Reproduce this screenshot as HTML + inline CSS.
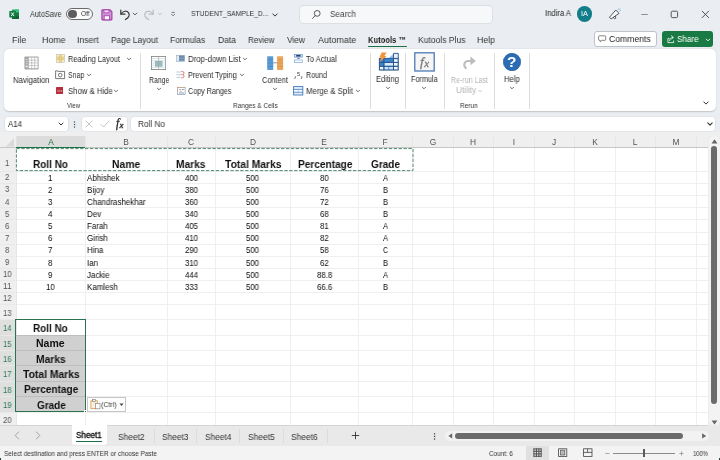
<!DOCTYPE html><html><head><meta charset="utf-8"><title>Excel</title><style>
html,body{margin:0;padding:0}body{width:720px;height:460px;overflow:hidden;position:relative;background:#eaedf1;font-family:"Liberation Sans", sans-serif}
.t{position:absolute;white-space:nowrap;transform-origin:0 50%;line-height:14px;height:14px;will-change:transform}
</style></head><body>
<svg style="position:absolute;left:8.6px;top:8.5px;" width="10.6" height="10.4" viewBox="0 0 11 11" fill="none">
<rect x="3" y="0.5" width="7.6" height="10" rx="0.8" fill="#21a366"/>
<rect x="6.8" y="0.5" width="3.8" height="3.3" fill="#33c481"/>
<rect x="6.8" y="3.8" width="3.8" height="3.3" fill="#107c41"/>
<rect x="3" y="7.1" width="7.6" height="3.4" fill="#185c37"/>
<rect x="0.2" y="2" width="7" height="7" rx="0.7" fill="#107c41"/>
<path d="M2.2 3.6 L5.2 7.4 M5.2 3.6 L2.2 7.4" stroke="#fff" stroke-width="1"/>
</svg>
<div style="position:absolute;left:66.2px;top:7.9px;width:26.7px;height:12.2px;background:#fbfbfb;border:0.7px solid #6a6a6a;border-radius:7px;box-sizing:border-box"></div>
<div style="position:absolute;left:68.4px;top:9.7px;width:8.7px;height:8.7px;background:#5d5d5d;border-radius:50%"></div>
<svg style="position:absolute;left:101px;top:8.5px;" width="12" height="12" viewBox="0 0 12 12" fill="none">
<path d="M0.9 1.5 Q0.9 0.9 1.5 0.9 H9 L10.9 2.8 V10.3 Q10.9 10.9 10.3 10.9 H1.5 Q0.9 10.9 0.9 10.3 Z" fill="#cf93d6" stroke="#a23aa8" stroke-width="1.1"/>
<rect x="3" y="1" width="5" height="2.8" fill="#f3e4f5" stroke="#a23aa8" stroke-width="0.7"/>
<rect x="3.2" y="6.8" width="5.4" height="4" fill="#fff" stroke="#a23aa8" stroke-width="0.8"/>
</svg>
<svg style="position:absolute;left:119px;top:8px;" width="12" height="13" viewBox="0 0 12 13" fill="none">
<path d="M1.8 2 V6.2 H6" stroke="#3a3a3a" stroke-width="1.2" stroke-linecap="round" stroke-linejoin="round"/>
<path d="M2 6 C4 2.6 8 2.4 9.6 4.8 C11 7 10 9.4 6.4 11.6" stroke="#3a3a3a" stroke-width="1.2" stroke-linecap="round"/>
</svg>
<svg style="position:absolute;left:131px;top:10.3px;" width="8" height="8" viewBox="0 0 8 8" fill="none"><path d="M2.2 3.1 L4 4.9 L5.8 3.1" stroke="#444" stroke-width="0.9" stroke-linecap="round" stroke-linejoin="round"/></svg>
<svg style="position:absolute;left:143px;top:8px;" width="12" height="13" viewBox="0 0 12 13" fill="none">
<path d="M10.2 2 V6.2 H6" stroke="#b9bcc1" stroke-width="1.2" stroke-linecap="round" stroke-linejoin="round"/>
<path d="M10 6 C8 2.6 4 2.4 2.4 4.8 C1 7 2 9.4 5.6 11.6" stroke="#b9bcc1" stroke-width="1.2" stroke-linecap="round"/>
</svg>
<svg style="position:absolute;left:155.5px;top:10.3px;" width="8" height="8" viewBox="0 0 8 8" fill="none"><path d="M2.4 3.2 L4 4.8 L5.6 3.2" stroke="#b8bbc0" stroke-width="0.9" stroke-linecap="round" stroke-linejoin="round"/></svg>
<svg style="position:absolute;left:169px;top:10px;" width="8" height="9" viewBox="0 0 8 9" fill="none"><path d="M2.6 2.4 H5.6" stroke="#555" stroke-width="0.8"/><path d="M2.5 4.2 L4.1 5.8 L5.7 4.2" stroke="#555" stroke-width="0.8" stroke-linecap="round" stroke-linejoin="round"/></svg>
<svg style="position:absolute;left:271px;top:10.5px;" width="8" height="8" viewBox="0 0 8 8" fill="none"><path d="M1.7999999999999998 2.9 L4 5.1 L6.2 2.9" stroke="#333" stroke-width="1" stroke-linecap="round" stroke-linejoin="round"/></svg>
<div style="position:absolute;left:298.5px;top:4.5px;width:194.5px;height:19.5px;background:#f7f8fa;border:1px solid #dcdfe3;border-radius:4px;box-sizing:border-box"></div>
<svg style="position:absolute;left:311px;top:9px;" width="11" height="11" viewBox="0 0 11 11" fill="none"><circle cx="6.2" cy="4.4" r="2.9" stroke="#444" stroke-width="0.9"/><path d="M4.2 6.6 L1.6 9.4" stroke="#444" stroke-width="0.9" stroke-linecap="round"/></svg>
<div style="position:absolute;left:576.5px;top:6.3px;width:15.5px;height:15.5px;background:#127e8a;border-radius:50%"></div>
<svg style="position:absolute;left:607px;top:7px;" width="16" height="15" viewBox="0 0 16 15" fill="none">
<path d="M2.4 10.4 L8.8 3 L12 6.4 L4.2 11.8 Z" fill="#f8f9fb" stroke="#444" stroke-width="0.9" stroke-linejoin="round"/>
<path d="M6.4 10.4 L7.4 11.8 L8.8 11.2 L8.4 9.2" stroke="#444" stroke-width="0.8" stroke-linejoin="round" stroke-linecap="round"/>
<path d="M10.8 2.6 L11.6 1.6 M12.6 4.2 L13.8 3.4 M12 3 L13 1.8" stroke="#7fb2e0" stroke-width="0.7" stroke-linecap="round"/>
</svg>
<svg style="position:absolute;left:640px;top:10px;" width="9" height="9" viewBox="0 0 9 9" fill="none"><path d="M1.2 4.5 H7.8" stroke="#777" stroke-width="0.8"/></svg>
<svg style="position:absolute;left:670px;top:9.5px;" width="9" height="9" viewBox="0 0 9 9" fill="none"><rect x="1.2" y="1.2" width="6.4" height="6.4" rx="1.2" stroke="#444" stroke-width="0.9"/></svg>
<svg style="position:absolute;left:700.5px;top:10px;" width="9" height="9" viewBox="0 0 9 9" fill="none"><path d="M1.2 1.2 L7.6 7.6 M7.6 1.2 L1.2 7.6" stroke="#444" stroke-width="0.9" stroke-linecap="round"/></svg>
<div style="position:absolute;left:368px;top:45.5px;width:38.5px;height:1.2px;background:#1e7145;border-radius:1px"></div>
<div style="position:absolute;left:593.5px;top:31px;width:63.0px;height:15.5px;background:#fff;border:1px solid #bfc2c6;border-radius:3px;box-sizing:border-box"></div>
<svg style="position:absolute;left:597.6px;top:35.3px;" width="9" height="8" viewBox="0 0 9 8" fill="none"><path d="M1.3 0.8 H7 Q7.7 0.8 7.7 1.5 V4.6 Q7.7 5.3 7 5.3 H3.8 L2.2 6.9 V5.3 H1.3 Q0.6 5.3 0.6 4.6 V1.5 Q0.6 0.8 1.3 0.8 Z" stroke="#555" stroke-width="0.7" stroke-linejoin="round"/></svg>
<div style="position:absolute;left:662px;top:31px;width:51px;height:15.5px;background:#1a7a43;border-radius:3px"></div>
<svg style="position:absolute;left:666.5px;top:35px;" width="8" height="9" viewBox="0 0 8 9" fill="none"><path d="M2.6 3.4 H0.9 V7.6 H6.6 V5.6" stroke="#fff" stroke-width="0.8" stroke-linejoin="round"/><path d="M2.6 5.6 C2.8 3.6 4 2.6 6 2.4 M4.4 0.8 L6.2 2.4 L4.6 4.2" stroke="#fff" stroke-width="0.8" stroke-linecap="round" stroke-linejoin="round"/></svg>
<svg style="position:absolute;left:703.5px;top:35.5px;" width="8" height="8" viewBox="0 0 8 8" fill="none"><path d="M2.3 3.15 L4 4.85 L5.7 3.15" stroke="#fff" stroke-width="0.9" stroke-linecap="round" stroke-linejoin="round"/></svg>
<div style="position:absolute;left:4px;top:48.8px;width:712px;height:62.3px;background:#fff;border-radius:5px;box-shadow:0 0.5px 1.5px rgba(0,0,0,0.18)"></div>
<div style="position:absolute;left:139.9px;top:52.5px;width:0.8px;height:56.0px;background:#dcdcdc;"></div>
<div style="position:absolute;left:370.1px;top:52.5px;width:0.8px;height:56.0px;background:#dcdcdc;"></div>
<div style="position:absolute;left:405.2px;top:52.5px;width:0.8px;height:56.0px;background:#dcdcdc;"></div>
<div style="position:absolute;left:444.4px;top:52.5px;width:0.8px;height:56.0px;background:#dcdcdc;"></div>
<div style="position:absolute;left:494.4px;top:52.5px;width:0.8px;height:56.0px;background:#dcdcdc;"></div>
<div style="position:absolute;left:529.2px;top:52.5px;width:0.8px;height:56.0px;background:#dcdcdc;"></div>
<svg style="position:absolute;left:24px;top:56.2px;" width="15" height="14" viewBox="0 0 15 14" fill="none">
<rect x="0.4" y="0.4" width="14.2" height="13" rx="0.8" fill="#a6a6a6"/>
<rect x="4.8" y="1.6" width="8.8" height="10.6" fill="#fff"/>
<path d="M7.7 1.6 V12.2 M10.7 1.6 V12.2 M4.8 4.2 H13.6 M4.8 6.9 H13.6 M4.8 9.6 H13.6" stroke="#b5b5b5" stroke-width="0.7"/>
<path d="M1.8 3.4 H3.6 M1.8 5.6 H3.6 M1.8 7.8 H3.6" stroke="#e8e8e8" stroke-width="0.8"/>
<rect x="1.6" y="9.8" width="2.2" height="1.4" fill="#f2f2f2"/>
</svg>
<svg style="position:absolute;left:55.8px;top:54.1px;" width="9" height="9" viewBox="0 0 9 9" fill="none">
<rect x="0.4" y="0.4" width="8" height="8" fill="#fbf3cf" stroke="#b9b9b9" stroke-width="0.6"/>
<rect x="3.1" y="0.6" width="2.6" height="7.6" fill="#f0d77c"/>
<rect x="0.6" y="3.1" width="7.6" height="2.6" fill="#f0d77c"/>
<path d="M0.4 3.1 H8.4 M0.4 5.7 H8.4 M3.1 0.4 V8.4 M5.7 0.4 V8.4" stroke="#c9b98a" stroke-width="0.5"/>
</svg>
<svg style="position:absolute;left:125.30000000000001px;top:55.2px;" width="8" height="8" viewBox="0 0 8 8" fill="none"><path d="M2.4 3.2 L4 4.8 L5.6 3.2" stroke="#444" stroke-width="0.8" stroke-linecap="round" stroke-linejoin="round"/></svg>
<svg style="position:absolute;left:54.6px;top:69.8px;" width="11" height="10" viewBox="0 0 11 10" fill="none">
<path d="M0.6 2.6 V0.9 H3" stroke="#555" stroke-width="0.8"/>
<path d="M3 1.4 H9.6 V8.6 H0.6 V2.6" stroke="#555" stroke-width="0.8"/>
<circle cx="5.2" cy="5.1" r="1.8" stroke="#555" stroke-width="0.8"/>
</svg>
<svg style="position:absolute;left:84.5px;top:71px;" width="8" height="8" viewBox="0 0 8 8" fill="none"><path d="M2.4 3.2 L4 4.8 L5.6 3.2" stroke="#444" stroke-width="0.8" stroke-linecap="round" stroke-linejoin="round"/></svg>
<svg style="position:absolute;left:55.8px;top:86.9px;" width="7.6" height="7.6" viewBox="0 0 7.6 7.6" fill="none">
<rect x="0" y="0" width="7.6" height="7.6" rx="0.7" fill="#b8303d"/>
<circle cx="2" cy="3.9" r="0.55" fill="#f6d5d8"/><circle cx="3.8" cy="3.9" r="0.55" fill="#f6d5d8"/><circle cx="5.6" cy="3.9" r="0.55" fill="#f6d5d8"/>
</svg>
<svg style="position:absolute;left:112.3px;top:87px;" width="8" height="8" viewBox="0 0 8 8" fill="none"><path d="M2.4 3.2 L4 4.8 L5.6 3.2" stroke="#444" stroke-width="0.8" stroke-linecap="round" stroke-linejoin="round"/></svg>
<svg style="position:absolute;left:151px;top:56px;" width="15" height="14" viewBox="0 0 15 14" fill="none">
<rect x="0.5" y="0.4" width="14.2" height="13.2" fill="#fff" stroke="#7d7d7d" stroke-width="0.8"/>
<path d="M0.5 2.6 H14.7 M0.5 4.8 H14.7 M0.5 7 H14.7 M0.5 9.2 H14.7 M0.5 11.4 H14.7" stroke="#bcd3da" stroke-width="0.6"/>
<rect x="4" y="4.9" width="7.4" height="5.8" fill="#94b8b8"/>
<path d="M4 7 H11.4 M4 9 H11.4" stroke="#a9c9c9" stroke-width="0.5"/>
<path d="M7.6 0.4 V13.6" stroke="#a0a0a0" stroke-width="0.6"/>
</svg>
<svg style="position:absolute;left:154.5px;top:85.2px;" width="8" height="8" viewBox="0 0 8 8" fill="none"><path d="M2.4 3.2 L4 4.8 L5.6 3.2" stroke="#444" stroke-width="0.8" stroke-linecap="round" stroke-linejoin="round"/></svg>
<svg style="position:absolute;left:176.3px;top:55px;" width="9" height="7" viewBox="0 0 9 7" fill="none">
<rect x="0.4" y="0.4" width="8.2" height="5.8" fill="#fff" stroke="#9aa7b5" stroke-width="0.6"/>
<path d="M1 1.8 H2.4 M1 3.3 H2.4 M1 4.8 H2.4" stroke="#b5bec8" stroke-width="0.5"/>
<rect x="2.9" y="0.5" width="5.6" height="5.4" fill="#6a8cae"/>
<path d="M2.9 3.2 H8.5" stroke="#9db6cf" stroke-width="0.6"/>
<path d="M0.4 6.3 H8.6" stroke="#9cc3e6" stroke-width="0.7"/>
</svg>
<svg style="position:absolute;left:240.6px;top:55.2px;" width="8" height="8" viewBox="0 0 8 8" fill="none"><path d="M2.4 3.2 L4 4.8 L5.6 3.2" stroke="#444" stroke-width="0.8" stroke-linecap="round" stroke-linejoin="round"/></svg>
<svg style="position:absolute;left:176.3px;top:71.2px;" width="9" height="8" viewBox="0 0 9 8" fill="none">
<path d="M0.4 1 H4.6 M0.4 3.7 H4.6 M0.4 6.4 H4.6" stroke="#a9bccf" stroke-width="0.8"/>
<path d="M5.2 0.6 H6.8 Q8 0.6 8 2 Q8 3.5 6.6 3.6 Q8 3.7 8 5.2 Q8 6.8 6.8 6.8 H5.2" stroke="#e07468" stroke-width="0.9"/>
<path d="M4.6 3.7 H6.6" stroke="#e07468" stroke-width="0.7"/>
</svg>
<svg style="position:absolute;left:237.6px;top:71px;" width="8" height="8" viewBox="0 0 8 8" fill="none"><path d="M2.4 3.2 L4 4.8 L5.6 3.2" stroke="#444" stroke-width="0.8" stroke-linecap="round" stroke-linejoin="round"/></svg>
<svg style="position:absolute;left:176.5px;top:86.9px;" width="9" height="8.4" viewBox="0 0 9 8.4" fill="none">
<rect x="0.5" y="0.5" width="7.6" height="7" fill="#fff" stroke="#8a9bb0" stroke-width="0.7"/>
<path d="M2 2.6 H4.2 M3 4.4 H4.6" stroke="#e08a4a" stroke-width="0.8"/>
<path d="M5 2.6 H7 M2 6 H7" stroke="#5b8cc4" stroke-width="0.8"/>
<path d="M0.5 0.5 H8.1" stroke="#e0a36a" stroke-width="0.6"/>
</svg>
<svg style="position:absolute;left:266.8px;top:55.8px;" width="17" height="15" viewBox="0 0 17 15" fill="none">
<rect x="0.2" y="0.3" width="6" height="13.6" rx="0.5" fill="#5c9ad6"/>
<rect x="10.1" y="0.3" width="6" height="13.6" rx="0.5" fill="#eaa55a"/>
<path d="M0.2 3.8 H6.2 M0.2 7.1 H6.2 M0.2 10.4 H6.2" stroke="#4482c2" stroke-width="0.6"/>
<path d="M10.1 3.8 H16.1 M10.1 7.1 H16.1 M10.1 10.4 H16.1" stroke="#d68d3e" stroke-width="0.6"/>
<path d="M6.2 6.8 H10.1" stroke="#6d7f93" stroke-width="0.8"/>
</svg>
<svg style="position:absolute;left:271px;top:85.2px;" width="8" height="8" viewBox="0 0 8 8" fill="none"><path d="M2.4 3.2 L4 4.8 L5.6 3.2" stroke="#444" stroke-width="0.8" stroke-linecap="round" stroke-linejoin="round"/></svg>
<svg style="position:absolute;left:293.6px;top:54px;" width="9" height="9.5" viewBox="0 0 9 9.5" fill="none">
<rect x="0.5" y="0.5" width="7.8" height="2.6" fill="#e4edf7" stroke="#5b8cc4" stroke-width="0.7"/>
<rect x="2.2" y="1" width="4.4" height="1.6" fill="#1f3f73"/>
<path d="M3.4 4.5 H5.6" stroke="#3a5f93" stroke-width="0.8"/>
<rect x="0.5" y="6" width="7.8" height="2.6" fill="#fff" stroke="#7aa7d8" stroke-width="0.7"/>
</svg>
<svg style="position:absolute;left:294px;top:75.5px;" width="9" height="4" viewBox="0 0 9 4" fill="none"><path d="M1.3 0.6 V1.6 L0.8 2.6 M7.8 0.6 V1.6 L7.3 2.6" stroke="#444" stroke-width="0.8" stroke-linecap="round"/></svg>
<svg style="position:absolute;left:292.8px;top:85.8px;" width="11" height="10" viewBox="0 0 11 10" fill="none">
<rect x="0.6" y="0.6" width="9.2" height="8.4" fill="#e3eefa" stroke="#3f78b8" stroke-width="0.9"/>
<path d="M0.6 3.4 H9.8 M0.6 6.2 H9.8 M5.2 3.4 V6.2" stroke="#3f78b8" stroke-width="0.8"/>
<rect x="1.2" y="3.9" width="8" height="1.8" fill="#fff" opacity="0.7"/>
</svg>
<svg style="position:absolute;left:353.6px;top:87px;" width="8" height="8" viewBox="0 0 8 8" fill="none"><path d="M2.4 3.2 L4 4.8 L5.6 3.2" stroke="#444" stroke-width="0.8" stroke-linecap="round" stroke-linejoin="round"/></svg>
<svg style="position:absolute;left:377.5px;top:52px;" width="21" height="19" viewBox="0 0 21 19" fill="none">
<rect x="1.2" y="6.4" width="19" height="11.6" fill="#3a84cc"/>
<path d="M10.4 6.4 L15.2 2 V6.4 Z" fill="#8cc0ee"/>
<rect x="15.8" y="1.6" width="4.4" height="4.4" fill="#e9eef5"/>
<rect x="16" y="7.2" width="3.8" height="2.8" fill="#f1f4f8"/>
<rect x="16" y="11" width="3.8" height="2.8" fill="#f1f4f8"/>
<rect x="16" y="14.8" width="3.8" height="2.8" fill="#f1f4f8"/>
<rect x="1.8" y="14.8" width="3.6" height="2.8" fill="#f1f4f8"/>
<rect x="6.4" y="14.8" width="4" height="2.8" fill="#cfe3f6"/>
<rect x="11.2" y="14.8" width="4" height="2.8" fill="#cfe3f6"/>
<rect x="6.4" y="11" width="8.8" height="2.8" fill="#d9e9f8"/>
<path d="M1.2 6.4 H20.4 M1.2 10.4 H20.4 M1.2 14.3 H20.4 M1.2 18.1 H20.4 M1.4 6.4 V18.1 M5.9 5 V18.1 M15.5 1.4 V18.1 M20.3 1.4 V18.1 M15.5 1.4 H20.3" stroke="#254f86" stroke-width="0.9"/>
<path d="M3.6 0.4 H8.6 L6.4 4 H8.6 L1.4 10.2 L3.4 5.6 H1.4 Z" fill="#f0943a"/>
</svg>
<svg style="position:absolute;left:383.6px;top:84.3px;" width="8" height="8" viewBox="0 0 8 8" fill="none"><path d="M2.4 3.2 L4 4.8 L5.6 3.2" stroke="#444" stroke-width="0.8" stroke-linecap="round" stroke-linejoin="round"/></svg>
<svg style="position:absolute;left:414.2px;top:52.2px;" width="21" height="20" viewBox="0 0 21 20" fill="none">
<rect x="0.8" y="0.8" width="19.4" height="18.2" fill="#f5f5f5" stroke="#3f6fb0" stroke-width="1.2"/>
</svg>
<svg style="position:absolute;left:420.4px;top:84.3px;" width="8" height="8" viewBox="0 0 8 8" fill="none"><path d="M2.4 3.2 L4 4.8 L5.6 3.2" stroke="#444" stroke-width="0.8" stroke-linecap="round" stroke-linejoin="round"/></svg>
<svg style="position:absolute;left:462px;top:56px;" width="15" height="14.5" viewBox="0 0 15 14.5" fill="none">
<path d="M8.4 0.6 L13.8 4.9 L8.4 9.2 Z" fill="#bcbcbc"/>
<path d="M10 4.9 H6.4 C2 4.9 0.8 10 4.4 12.8" stroke="#bcbcbc" stroke-width="2" stroke-linecap="butt"/>
</svg>
<svg style="position:absolute;left:476.3px;top:86.6px;" width="8" height="8" viewBox="0 0 8 8" fill="none"><path d="M2.5 3.25 L4 4.75 L5.5 3.25" stroke="#b9b9b9" stroke-width="0.8" stroke-linecap="round" stroke-linejoin="round"/></svg>
<svg style="position:absolute;left:503px;top:52.8px;" width="18" height="18" viewBox="0 0 18 18" fill="none">
<circle cx="9" cy="9" r="8.7" fill="#2b6cb5"/>
<circle cx="9" cy="9" r="8.7" fill="none" stroke="#1f548f" stroke-width="0.6"/>
</svg>
<svg style="position:absolute;left:507.8px;top:84.3px;" width="8" height="8" viewBox="0 0 8 8" fill="none"><path d="M2.4 3.2 L4 4.8 L5.6 3.2" stroke="#444" stroke-width="0.8" stroke-linecap="round" stroke-linejoin="round"/></svg>
<svg style="position:absolute;left:702px;top:98.8px;" width="8" height="8" viewBox="0 0 8 8" fill="none"><path d="M1.7999999999999998 2.9 L4 5.1 L6.2 2.9" stroke="#333" stroke-width="1" stroke-linecap="round" stroke-linejoin="round"/></svg>
<div style="position:absolute;left:4.5px;top:116.8px;width:63.5px;height:14.4px;background:#fff;border-radius:3px;box-shadow:0 0 0 0.6px #d9dce0"></div>
<svg style="position:absolute;left:57.3px;top:120.2px;" width="8" height="8" viewBox="0 0 8 8" fill="none"><path d="M2 3.0 L4 5.0 L6 3.0" stroke="#333" stroke-width="1" stroke-linecap="round" stroke-linejoin="round"/></svg>
<svg style="position:absolute;left:73.4px;top:119.5px;" width="3" height="9" viewBox="0 0 3 9" fill="none"><circle cx="1.5" cy="2" r="0.75" fill="#555"/><circle cx="1.5" cy="4.45" r="0.75" fill="#555"/><circle cx="1.5" cy="6.9" r="0.75" fill="#555"/></svg>
<div style="position:absolute;left:81.8px;top:116.8px;width:45.7px;height:14.4px;background:#fff;border-radius:3px;box-shadow:0 0 0 0.6px #d9dce0"></div>
<svg style="position:absolute;left:85px;top:120px;" width="8" height="8" viewBox="0 0 8 8" fill="none"><path d="M0.8 0.8 L7.2 7.2 M7.2 0.8 L0.8 7.2" stroke="#b9b9b9" stroke-width="0.8" stroke-linecap="round"/></svg>
<svg style="position:absolute;left:99.5px;top:120px;" width="10" height="8" viewBox="0 0 10 8" fill="none"><path d="M0.8 4.4 L3.4 7 L9 0.9" stroke="#b9b9b9" stroke-width="0.8" stroke-linecap="round" stroke-linejoin="round"/></svg>
<div style="position:absolute;left:130.5px;top:116.8px;width:584.5px;height:14.4px;background:#fff;border-radius:3px;box-shadow:0 0 0 0.6px #d9dce0"></div>
<svg style="position:absolute;left:705.6px;top:119.6px;" width="8" height="8" viewBox="0 0 8 8" fill="none"><path d="M1.7999999999999998 2.9 L4 5.1 L6.2 2.9" stroke="#333" stroke-width="1.1" stroke-linecap="round" stroke-linejoin="round"/></svg>
<div style="position:absolute;left:0px;top:131.6px;width:720px;height:15.7px;background:#efefef;"></div>
<div style="position:absolute;left:0px;top:147.3px;width:16px;height:278.4px;background:#efefef;"></div>
<div style="position:absolute;left:16px;top:147.3px;width:691.5px;height:278.4px;background:#fff;"></div>
<div style="position:absolute;left:16px;top:135.5px;width:69px;height:11.8px;background:#dcdcdc;"></div>
<div style="position:absolute;left:0px;top:319px;width:16px;height:93.4px;background:#dfdfdf;"></div>
<div style="position:absolute;left:15px;top:319px;width:1px;height:93.4px;background:#1e7145;"></div>
<div style="position:absolute;left:84.6px;top:136.5px;width:0.8px;height:10.8px;background:#e6e6e6;"></div>
<div style="position:absolute;left:167.1px;top:136.5px;width:0.8px;height:10.8px;background:#e6e6e6;"></div>
<div style="position:absolute;left:214.6px;top:136.5px;width:0.8px;height:10.8px;background:#e6e6e6;"></div>
<div style="position:absolute;left:289.9px;top:136.5px;width:0.8px;height:10.8px;background:#e6e6e6;"></div>
<div style="position:absolute;left:357.9px;top:136.5px;width:0.8px;height:10.8px;background:#e6e6e6;"></div>
<div style="position:absolute;left:412.1px;top:136.5px;width:0.8px;height:10.8px;background:#e6e6e6;"></div>
<div style="position:absolute;left:452.6px;top:136.5px;width:0.8px;height:10.8px;background:#e6e6e6;"></div>
<div style="position:absolute;left:493.1px;top:136.5px;width:0.8px;height:10.8px;background:#e6e6e6;"></div>
<div style="position:absolute;left:533.6px;top:136.5px;width:0.8px;height:10.8px;background:#e6e6e6;"></div>
<div style="position:absolute;left:574.1px;top:136.5px;width:0.8px;height:10.8px;background:#e6e6e6;"></div>
<div style="position:absolute;left:614.8px;top:136.5px;width:0.8px;height:10.8px;background:#e6e6e6;"></div>
<div style="position:absolute;left:655.2px;top:136.5px;width:0.8px;height:10.8px;background:#e6e6e6;"></div>
<div style="position:absolute;left:695.9px;top:136.5px;width:0.8px;height:10.8px;background:#e6e6e6;"></div>
<div style="position:absolute;left:15.6px;top:136.5px;width:0.8px;height:10.8px;background:#e2e2e2;"></div>
<svg style="position:absolute;left:5px;top:137.5px;" width="10" height="9" viewBox="0 0 10 9" fill="none"><path d="M9 0.5 V8.5 H0.8 Z" fill="#d9d9d9"/></svg>
<div style="position:absolute;left:84.6px;top:147.3px;width:0.8px;height:278.4px;background:#efefef;"></div>
<div style="position:absolute;left:167.1px;top:147.3px;width:0.8px;height:278.4px;background:#efefef;"></div>
<div style="position:absolute;left:214.6px;top:147.3px;width:0.8px;height:278.4px;background:#efefef;"></div>
<div style="position:absolute;left:289.9px;top:147.3px;width:0.8px;height:278.4px;background:#efefef;"></div>
<div style="position:absolute;left:357.9px;top:147.3px;width:0.8px;height:278.4px;background:#efefef;"></div>
<div style="position:absolute;left:412.1px;top:147.3px;width:0.8px;height:278.4px;background:#efefef;"></div>
<div style="position:absolute;left:452.6px;top:147.3px;width:0.8px;height:278.4px;background:#efefef;"></div>
<div style="position:absolute;left:493.1px;top:147.3px;width:0.8px;height:278.4px;background:#efefef;"></div>
<div style="position:absolute;left:533.6px;top:147.3px;width:0.8px;height:278.4px;background:#efefef;"></div>
<div style="position:absolute;left:574.1px;top:147.3px;width:0.8px;height:278.4px;background:#efefef;"></div>
<div style="position:absolute;left:614.8px;top:147.3px;width:0.8px;height:278.4px;background:#efefef;"></div>
<div style="position:absolute;left:655.2px;top:147.3px;width:0.8px;height:278.4px;background:#efefef;"></div>
<div style="position:absolute;left:695.9px;top:147.3px;width:0.8px;height:278.4px;background:#efefef;"></div>
<div style="position:absolute;left:16px;top:171.0px;width:691.5px;height:0.8px;background:#efefef;"></div>
<div style="position:absolute;left:0px;top:171.0px;width:15px;height:0.8px;background:#e8e8e8;"></div>
<div style="position:absolute;left:16px;top:183.11px;width:691.5px;height:0.8px;background:#efefef;"></div>
<div style="position:absolute;left:0px;top:183.11px;width:15px;height:0.8px;background:#e8e8e8;"></div>
<div style="position:absolute;left:16px;top:195.22px;width:691.5px;height:0.8px;background:#efefef;"></div>
<div style="position:absolute;left:0px;top:195.22px;width:15px;height:0.8px;background:#e8e8e8;"></div>
<div style="position:absolute;left:16px;top:207.33px;width:691.5px;height:0.8px;background:#efefef;"></div>
<div style="position:absolute;left:0px;top:207.33px;width:15px;height:0.8px;background:#e8e8e8;"></div>
<div style="position:absolute;left:16px;top:219.44px;width:691.5px;height:0.8px;background:#efefef;"></div>
<div style="position:absolute;left:0px;top:219.44px;width:15px;height:0.8px;background:#e8e8e8;"></div>
<div style="position:absolute;left:16px;top:231.55px;width:691.5px;height:0.8px;background:#efefef;"></div>
<div style="position:absolute;left:0px;top:231.55px;width:15px;height:0.8px;background:#e8e8e8;"></div>
<div style="position:absolute;left:16px;top:243.66px;width:691.5px;height:0.8px;background:#efefef;"></div>
<div style="position:absolute;left:0px;top:243.66px;width:15px;height:0.8px;background:#e8e8e8;"></div>
<div style="position:absolute;left:16px;top:255.77px;width:691.5px;height:0.8px;background:#efefef;"></div>
<div style="position:absolute;left:0px;top:255.77px;width:15px;height:0.8px;background:#e8e8e8;"></div>
<div style="position:absolute;left:16px;top:267.88px;width:691.5px;height:0.8px;background:#efefef;"></div>
<div style="position:absolute;left:0px;top:267.88px;width:15px;height:0.8px;background:#e8e8e8;"></div>
<div style="position:absolute;left:16px;top:279.99px;width:691.5px;height:0.8px;background:#efefef;"></div>
<div style="position:absolute;left:0px;top:279.99px;width:15px;height:0.8px;background:#e8e8e8;"></div>
<div style="position:absolute;left:16px;top:292.1px;width:691.5px;height:0.8px;background:#efefef;"></div>
<div style="position:absolute;left:0px;top:292.1px;width:15px;height:0.8px;background:#e8e8e8;"></div>
<div style="position:absolute;left:16px;top:304.21px;width:691.5px;height:0.8px;background:#efefef;"></div>
<div style="position:absolute;left:0px;top:304.21px;width:15px;height:0.8px;background:#e8e8e8;"></div>
<div style="position:absolute;left:16px;top:319.1px;width:691.5px;height:0.8px;background:#efefef;"></div>
<div style="position:absolute;left:0px;top:319.1px;width:15px;height:0.8px;background:#e8e8e8;"></div>
<div style="position:absolute;left:16px;top:334.52px;width:691.5px;height:0.8px;background:#efefef;"></div>
<div style="position:absolute;left:0px;top:334.52px;width:15px;height:0.8px;background:#e8e8e8;"></div>
<div style="position:absolute;left:16px;top:349.94px;width:691.5px;height:0.8px;background:#efefef;"></div>
<div style="position:absolute;left:0px;top:349.94px;width:15px;height:0.8px;background:#e8e8e8;"></div>
<div style="position:absolute;left:16px;top:365.36px;width:691.5px;height:0.8px;background:#efefef;"></div>
<div style="position:absolute;left:0px;top:365.36px;width:15px;height:0.8px;background:#e8e8e8;"></div>
<div style="position:absolute;left:16px;top:380.78px;width:691.5px;height:0.8px;background:#efefef;"></div>
<div style="position:absolute;left:0px;top:380.78px;width:15px;height:0.8px;background:#e8e8e8;"></div>
<div style="position:absolute;left:16px;top:396.2px;width:691.5px;height:0.8px;background:#efefef;"></div>
<div style="position:absolute;left:0px;top:396.2px;width:15px;height:0.8px;background:#e8e8e8;"></div>
<div style="position:absolute;left:16px;top:411.62px;width:691.5px;height:0.8px;background:#efefef;"></div>
<div style="position:absolute;left:0px;top:411.62px;width:15px;height:0.8px;background:#e8e8e8;"></div>
<div style="position:absolute;left:16px;top:425.3px;width:691.5px;height:0.8px;background:#efefef;"></div>
<div style="position:absolute;left:0px;top:425.3px;width:15px;height:0.8px;background:#e8e8e8;"></div>
<div style="position:absolute;left:0px;top:146.9px;width:707.5px;height:0.9px;background:#c6c6c6;"></div>
<div style="position:absolute;left:15.6px;top:147.3px;width:0.8px;height:278.4px;background:#e6e6e6;"></div>
<svg style="position:absolute;left:15px;top:146.8px;" width="399" height="26" viewBox="0 0 399 26" fill="none">
<rect x="1.4" y="1.6" width="396.6" height="22" stroke="#fff" stroke-width="1"/>
<rect x="1.4" y="1.6" width="396.6" height="22" stroke="#3d7d5c" stroke-width="0.9" stroke-dasharray="3.4 1.5"/>
</svg>
<div style="position:absolute;left:16px;top:334.92px;width:69px;height:77.08px;background:#d0d0d0;"></div>
<div style="position:absolute;left:16px;top:334.52px;width:69px;height:0.8px;background:#bebebe;"></div>
<div style="position:absolute;left:16px;top:349.94px;width:69px;height:0.8px;background:#bebebe;"></div>
<div style="position:absolute;left:16px;top:365.36px;width:69px;height:0.8px;background:#bebebe;"></div>
<div style="position:absolute;left:16px;top:380.78px;width:69px;height:0.8px;background:#bebebe;"></div>
<div style="position:absolute;left:16px;top:396.2px;width:69px;height:0.8px;background:#bebebe;"></div>
<div style="position:absolute;left:15.2px;top:318.9px;width:70.8px;height:93.5px;background:none;border:1.1px solid #2a7350;box-sizing:border-box"></div>
<div style="position:absolute;left:83.6px;top:410.2px;width:3.3px;height:3.2px;background:#1e7145;border:0.6px solid #fff;box-sizing:border-box"></div>
<div style="position:absolute;left:87.1px;top:397.3px;width:38.7px;height:14.4px;background:#fdfdfd;border:1px solid #c6c6c6;box-sizing:border-box"></div>
<svg style="position:absolute;left:89.6px;top:398.6px;" width="11" height="11" viewBox="0 0 11 11" fill="none">
<rect x="0.9" y="1.8" width="6.4" height="7.8" fill="#fbeedb" stroke="#e0a25a" stroke-width="0.9"/>
<rect x="2.6" y="0.6" width="3" height="2" fill="#f4f4f4" stroke="#777" stroke-width="0.6"/>
<rect x="5.4" y="4.4" width="4.6" height="5.4" fill="#fff" stroke="#8a8a8a" stroke-width="0.7"/>
</svg>
<svg style="position:absolute;left:119.4px;top:402.8px;" width="5" height="4" viewBox="0 0 5 4" fill="none"><path d="M0.5 0.6 H4.5 L2.5 3 Z" fill="#444"/></svg>
<div style="position:absolute;left:707.5px;top:135.5px;width:12.5px;height:290.2px;background:#ececec;"></div>
<div style="position:absolute;left:708.8px;top:135.8px;width:10.8px;height:289.4px;background:#f3f3f3;border-radius:5px"></div>
<svg style="position:absolute;left:709.8px;top:137.8px;" width="9" height="7" viewBox="0 0 9 7" fill="none"><path d="M4.5 1.2 L7.5 5.4 H1.5 Z" fill="#666"/></svg>
<div style="position:absolute;left:711.2px;top:146.2px;width:6.0px;height:257.8px;background:#6b6b6b;border-radius:3.2px"></div>
<svg style="position:absolute;left:709.8px;top:418.5px;" width="9" height="7" viewBox="0 0 9 7" fill="none"><path d="M4.5 5.6 L7.4 1.6 H1.6 Z" fill="#666"/></svg>
<div style="position:absolute;left:0px;top:425.7px;width:720px;height:20.3px;background:#e9e9e9;"></div>
<div style="position:absolute;left:0px;top:425.3px;width:707.5px;height:0.8px;background:#d4d4d4;"></div>
<svg style="position:absolute;left:13px;top:430.5px;" width="8" height="9" viewBox="0 0 8 9" fill="none"><path d="M5.6 1 L2.2 4.5 L5.6 8" stroke="#9a9a9a" stroke-width="0.9" stroke-linecap="round" stroke-linejoin="round"/></svg>
<svg style="position:absolute;left:33.5px;top:430.5px;" width="8" height="9" viewBox="0 0 8 9" fill="none"><path d="M2.4 1 L5.8 4.5 L2.4 8" stroke="#9a9a9a" stroke-width="0.9" stroke-linecap="round" stroke-linejoin="round"/></svg>
<div style="position:absolute;left:71.8px;top:425.4px;width:35.6px;height:19.2px;background:#fff;border-radius:0 0 3px 3px"></div>
<div style="position:absolute;left:76px;top:440.5px;width:25.8px;height:1.1px;background:#1e7145;"></div>
<div style="position:absolute;left:153.8px;top:428.5px;width:0.8px;height:14.5px;background:#dcdcdc;"></div>
<div style="position:absolute;left:196.4px;top:428.5px;width:0.8px;height:14.5px;background:#dcdcdc;"></div>
<div style="position:absolute;left:239.4px;top:428.5px;width:0.8px;height:14.5px;background:#dcdcdc;"></div>
<div style="position:absolute;left:282.8px;top:428.5px;width:0.8px;height:14.5px;background:#dcdcdc;"></div>
<div style="position:absolute;left:326.8px;top:428.5px;width:0.8px;height:14.5px;background:#dcdcdc;"></div>
<svg style="position:absolute;left:350.5px;top:430.5px;" width="9" height="9" viewBox="0 0 9 9" fill="none"><path d="M4.5 0.8 V8.2 M0.8 4.5 H8.2" stroke="#333" stroke-width="0.9"/></svg>
<svg style="position:absolute;left:432.9px;top:431.5px;" width="3" height="9" viewBox="0 0 3 9" fill="none"><rect x="0.9" y="1.2" width="1.3" height="1.3" fill="#444"/><rect x="0.9" y="3.8" width="1.3" height="1.3" fill="#444"/><rect x="0.9" y="6.4" width="1.3" height="1.3" fill="#444"/></svg>
<div style="position:absolute;left:445px;top:430.8px;width:263.8px;height:10.0px;background:#f2f2f2;border-radius:5px"></div>
<svg style="position:absolute;left:446.5px;top:432px;" width="6" height="8" viewBox="0 0 6 8" fill="none"><path d="M5.2 1.2 V6.6 L1.4 3.9 Z" fill="#666"/></svg>
<div style="position:absolute;left:455.4px;top:432.5px;width:228.0px;height:6.7px;background:#6b6b6b;border-radius:3.4px"></div>
<svg style="position:absolute;left:700.6px;top:432px;" width="6" height="8" viewBox="0 0 6 8" fill="none"><path d="M1.1 1.2 V6.6 L5.2 3.9 Z" fill="#666"/></svg>
<div style="position:absolute;left:0px;top:446px;width:720px;height:14px;background:#f3f3f3;"></div>
<div style="position:absolute;left:525.5px;top:446px;width:23.9px;height:14px;background:#e0e0e0;"></div>
<svg style="position:absolute;left:532.7px;top:448.4px;" width="9" height="9" viewBox="0 0 9 9" fill="none"><path d="M0.5 0.9 H8.5 M0.5 3.3 H8.5 M0.5 5.9 H8.5 M0.5 8.3 H8.5 M0.9 0.5 V8.7 M3.4 0.5 V8.7 M5.9 0.5 V8.7 M8.2 0.5 V8.7" stroke="#333" stroke-width="0.8"/></svg>
<svg style="position:absolute;left:558px;top:448.4px;" width="9.5" height="9" viewBox="0 0 9.5 9" fill="none"><rect x="0.6" y="0.8" width="8.2" height="7.6" stroke="#444" stroke-width="0.8"/><rect x="2.6" y="2.2" width="4.2" height="4.8" fill="#b9b9b9" stroke="#555" stroke-width="0.7"/></svg>
<svg style="position:absolute;left:583.4px;top:448.4px;" width="9.5" height="9" viewBox="0 0 9.5 9" fill="none"><rect x="0.6" y="0.8" width="8.4" height="7.6" stroke="#444" stroke-width="0.8"/><path d="M4.6 0.8 V4.4 M0.6 4.4 H9" stroke="#444" stroke-width="0.8"/></svg>
<svg style="position:absolute;left:603.5px;top:450px;" width="7" height="7" viewBox="0 0 7 7" fill="none"><path d="M1.4 3.5 H5.6" stroke="#8a8a8a" stroke-width="0.7"/></svg>
<div style="position:absolute;left:612.5px;top:452.6px;width:62.5px;height:0.8px;background:#8a8a8a;"></div>
<div style="position:absolute;left:643.2px;top:448.8px;width:2.2px;height:8.6px;background:#5a5a5a;"></div>
<svg style="position:absolute;left:678px;top:450px;" width="7" height="7" viewBox="0 0 7 7" fill="none"><path d="M1.4 3.5 H5.6 M3.5 1.4 V5.6" stroke="#8a8a8a" stroke-width="0.7"/></svg>
<div style="position:absolute;left:0px;top:458.4px;width:1.2px;height:1.6px;background:#1d4d33;"></div>
<div style="position:absolute;left:718.6px;top:458.2px;width:1.4px;height:1.8px;background:#1d4d33;"></div>
<div style="position:absolute;left:16px;top:146.8px;width:69px;height:1.1px;background:#1e7145;"></div>
<span class="t" style="left:30px;top:7.30px;font-size:8.6px;color:#333;transform:scaleX(0.8449);">AutoSave</span>
<span class="t" style="left:80.8px;top:7.30px;font-size:6.8px;color:#333;transform:scaleX(0.9382);">Off</span>
<span class="t" style="left:190.5px;top:7.30px;font-size:7.8px;color:#333;transform:scaleX(0.8682);">STUDENT_SAMPLE_D...</span>
<span class="t" style="left:330px;top:7.30px;font-size:8.8px;color:#444;transform:scaleX(0.9327);">Search</span>
<span class="t" style="left:545px;top:7.30px;font-size:8.2px;color:#222;transform:scaleX(0.9364);">Indira A</span>
<span class="t" style="left:580.8px;top:7.30px;font-size:6.6px;color:#fff;transform:scaleX(1.1228);">IA</span>
<span class="t" style="left:12.3px;top:32.60px;font-size:9px;color:#333;transform:scaleX(0.9783);">File</span>
<span class="t" style="left:41.5px;top:32.60px;font-size:9px;color:#333;transform:scaleX(0.9785);">Home</span>
<span class="t" style="left:77.3px;top:32.60px;font-size:9px;color:#333;transform:scaleX(0.9638);">Insert</span>
<span class="t" style="left:111.3px;top:32.60px;font-size:9px;color:#333;transform:scaleX(0.9298);">Page Layout</span>
<span class="t" style="left:170.3px;top:32.60px;font-size:9px;color:#333;transform:scaleX(0.9383);">Formulas</span>
<span class="t" style="left:217.5px;top:32.60px;font-size:9px;color:#333;transform:scaleX(0.9466);">Data</span>
<span class="t" style="left:248.3px;top:32.60px;font-size:9px;color:#333;transform:scaleX(0.8978);">Review</span>
<span class="t" style="left:287px;top:32.60px;font-size:9px;color:#333;transform:scaleX(0.9298);">View</span>
<span class="t" style="left:317.8px;top:32.60px;font-size:9px;color:#333;transform:scaleX(0.9914);">Automate</span>
<span class="t" style="left:368px;top:32.60px;font-size:9px;font-weight:700;color:#1f1f1f;transform:scaleX(0.8444);">Kutools ™</span>
<span class="t" style="left:417.5px;top:32.60px;font-size:9px;color:#333;transform:scaleX(0.9494);">Kutools Plus</span>
<span class="t" style="left:476.5px;top:32.60px;font-size:9px;color:#333;transform:scaleX(0.9722);">Help</span>
<span class="t" style="left:608.6px;top:32.10px;font-size:9px;color:#222;transform:scaleX(0.9583);">Comments</span>
<span class="t" style="left:676.8px;top:32.10px;font-size:9px;color:#fff;transform:scaleX(0.9030);">Share</span>
<span class="t" style="left:13px;top:72.80px;font-size:8.6px;color:#2b2b2b;transform:scaleX(0.9013);">Navigation</span>
<span class="t" style="left:67.7px;top:52.00px;font-size:8.6px;color:#2b2b2b;transform:scaleX(0.8654);">Reading Layout</span>
<span class="t" style="left:67.7px;top:67.80px;font-size:8.6px;color:#2b2b2b;transform:scaleX(0.8118);">Snap</span>
<span class="t" style="left:67.7px;top:83.80px;font-size:8.6px;color:#2b2b2b;transform:scaleX(0.9016);">Show &amp; Hide</span>
<span class="t" style="left:66.7px;top:98.70px;font-size:7.6px;color:#333;transform:scaleX(0.8023);">View</span>
<span class="t" style="left:148.7px;top:72.80px;font-size:8.6px;color:#2b2b2b;transform:scaleX(0.8015);">Range</span>
<span class="t" style="left:188.3px;top:52.00px;font-size:8.6px;color:#2b2b2b;transform:scaleX(0.9118);">Drop-down List</span>
<span class="t" style="left:188.3px;top:67.80px;font-size:8.6px;color:#2b2b2b;transform:scaleX(0.8501);">Prevent Typing</span>
<span class="t" style="left:188.3px;top:83.80px;font-size:8.6px;color:#2b2b2b;transform:scaleX(0.8334);">Copy Ranges</span>
<span class="t" style="left:262px;top:72.80px;font-size:8.6px;color:#2b2b2b;transform:scaleX(0.8602);">Content</span>
<span class="t" style="left:306px;top:52.00px;font-size:8.6px;color:#2b2b2b;transform:scaleX(0.8803);">To Actual</span>
<span class="t" style="left:306px;top:67.80px;font-size:8.6px;color:#2b2b2b;transform:scaleX(0.8291);">Round</span>
<span class="t" style="left:296.9px;top:66.60px;font-size:5.6px;color:#333;transform:scaleX(1.0000);">5</span>
<span class="t" style="left:306px;top:83.80px;font-size:8.6px;color:#2b2b2b;transform:scaleX(0.9090);">Merge &amp; Split</span>
<span class="t" style="left:232.7px;top:98.70px;font-size:7.6px;color:#333;transform:scaleX(0.8559);">Ranges &amp; Cells</span>
<span class="t" style="left:376.2px;top:71.80px;font-size:8.6px;color:#2b2b2b;transform:scaleX(0.8713);">Editing</span>
<span class="t" style="left:419.8px;top:54.50px;font-size:13.5px;color:#7a7a7a;transform:scaleX(1.0000);font-family:'Liberation Serif',serif;font-style:italic;-webkit-text-stroke:0.3px #7a7a7a;">f<span style="font-size:11px;position:relative;top:1.1px;left:0.4px">x</span></span>
<span class="t" style="left:411.1px;top:71.80px;font-size:8.6px;color:#2b2b2b;transform:scaleX(0.8468);">Formula</span>
<span class="t" style="left:450.6px;top:73.30px;font-size:8.6px;color:#b4b4b4;transform:scaleX(0.8217);">Re-run Last</span>
<span class="t" style="left:456.3px;top:83.30px;font-size:8.6px;color:#b4b4b4;transform:scaleX(0.9612);">Utility</span>
<span class="t" style="left:460.3px;top:98.70px;font-size:7.6px;color:#333;transform:scaleX(0.8556);">Rerun</span>
<span class="t" style="left:507px;top:55.00px;font-size:15.5px;font-weight:700;color:#fff;transform:scaleX(1.0000);">?</span>
<span class="t" style="left:504.2px;top:72.00px;font-size:8.6px;color:#2b2b2b;transform:scaleX(0.8933);">Help</span>
<span class="t" style="left:7.6px;top:117.60px;font-size:8.2px;color:#222;transform:scaleX(0.9535);">A14</span>
<span class="t" style="left:115.8px;top:116.40px;font-size:11.5px;color:#222;transform:scaleX(1.0000);font-family:'Liberation Serif',serif;font-style:italic;-webkit-text-stroke:0.3px #222;">f<span style="font-size:9px;position:relative;top:1.3px;left:0.3px">x</span></span>
<span class="t" style="left:138px;top:117.00px;font-size:8.4px;color:#333;transform:scaleX(0.9829);">Roll No</span>
<span class="t" style="left:40.5px;top:134.70px;font-size:8.4px;color:#1e7145;transform:scaleX(1.0000);width:20px;text-align:center;">A</span>
<span class="t" style="left:116.25px;top:134.70px;font-size:8.4px;color:#555;transform:scaleX(1.0000);width:20px;text-align:center;">B</span>
<span class="t" style="left:181.25px;top:134.70px;font-size:8.4px;color:#555;transform:scaleX(1.0000);width:20px;text-align:center;">C</span>
<span class="t" style="left:242.65px;top:134.70px;font-size:8.4px;color:#555;transform:scaleX(1.0000);width:20px;text-align:center;">D</span>
<span class="t" style="left:314.3px;top:134.70px;font-size:8.4px;color:#555;transform:scaleX(1.0000);width:20px;text-align:center;">E</span>
<span class="t" style="left:375.4px;top:134.70px;font-size:8.4px;color:#555;transform:scaleX(1.0000);width:20px;text-align:center;">F</span>
<span class="t" style="left:422.75px;top:134.70px;font-size:8.4px;color:#555;transform:scaleX(1.0000);width:20px;text-align:center;">G</span>
<span class="t" style="left:463.25px;top:134.70px;font-size:8.4px;color:#555;transform:scaleX(1.0000);width:20px;text-align:center;">H</span>
<span class="t" style="left:503.75px;top:134.70px;font-size:8.4px;color:#555;transform:scaleX(1.0000);width:20px;text-align:center;">I</span>
<span class="t" style="left:544.25px;top:134.70px;font-size:8.4px;color:#555;transform:scaleX(1.0000);width:20px;text-align:center;">J</span>
<span class="t" style="left:584.85px;top:134.70px;font-size:8.4px;color:#555;transform:scaleX(1.0000);width:20px;text-align:center;">K</span>
<span class="t" style="left:625.4px;top:134.70px;font-size:8.4px;color:#555;transform:scaleX(1.0000);width:20px;text-align:center;">L</span>
<span class="t" style="left:665.95px;top:134.70px;font-size:8.4px;color:#555;transform:scaleX(1.0000);width:20px;text-align:center;">M</span>
<span class="t" style="left:5.15px;top:157.20px;font-size:8.2px;color:#555;transform:scaleX(0.9425);">1</span>
<span class="t" style="left:5.15px;top:171.31px;font-size:8.2px;color:#555;transform:scaleX(0.9425);">2</span>
<span class="t" style="left:5.15px;top:183.42px;font-size:8.2px;color:#555;transform:scaleX(0.9425);">3</span>
<span class="t" style="left:5.15px;top:195.53px;font-size:8.2px;color:#555;transform:scaleX(0.9425);">4</span>
<span class="t" style="left:5.15px;top:207.64px;font-size:8.2px;color:#555;transform:scaleX(0.9425);">5</span>
<span class="t" style="left:5.15px;top:219.75px;font-size:8.2px;color:#555;transform:scaleX(0.9425);">6</span>
<span class="t" style="left:5.15px;top:231.86px;font-size:8.2px;color:#555;transform:scaleX(0.9425);">7</span>
<span class="t" style="left:5.15px;top:243.97px;font-size:8.2px;color:#555;transform:scaleX(0.9425);">8</span>
<span class="t" style="left:5.15px;top:256.08px;font-size:8.2px;color:#555;transform:scaleX(0.9425);">9</span>
<span class="t" style="left:3.0px;top:268.19px;font-size:8.2px;color:#555;transform:scaleX(0.9441);">10</span>
<span class="t" style="left:3.0px;top:280.30px;font-size:8.2px;color:#555;transform:scaleX(1.0118);">11</span>
<span class="t" style="left:3.0px;top:292.41px;font-size:8.2px;color:#555;transform:scaleX(0.9441);">12</span>
<span class="t" style="left:3.0px;top:306.70px;font-size:8.2px;color:#555;transform:scaleX(0.9441);">13</span>
<span class="t" style="left:3.0px;top:322.12px;font-size:8.2px;color:#2a7a52;transform:scaleX(0.9441);">14</span>
<span class="t" style="left:3.0px;top:337.54px;font-size:8.2px;color:#2a7a52;transform:scaleX(0.9441);">15</span>
<span class="t" style="left:3.0px;top:352.96px;font-size:8.2px;color:#2a7a52;transform:scaleX(0.9441);">16</span>
<span class="t" style="left:3.0px;top:368.38px;font-size:8.2px;color:#2a7a52;transform:scaleX(0.9441);">17</span>
<span class="t" style="left:3.0px;top:383.80px;font-size:8.2px;color:#2a7a52;transform:scaleX(0.9441);">18</span>
<span class="t" style="left:3.0px;top:399.22px;font-size:8.2px;color:#2a7a52;transform:scaleX(0.9441);">19</span>
<span class="t" style="left:3.0px;top:413.50px;font-size:8.2px;color:#555;transform:scaleX(0.9441);">20</span>
<span class="t" style="left:33px;top:156.90px;font-size:10.5px;font-weight:700;color:#111;transform:scaleX(0.9524);">Roll No</span>
<span class="t" style="left:111.8px;top:156.90px;font-size:10.5px;font-weight:700;color:#111;transform:scaleX(0.9857);">Name</span>
<span class="t" style="left:176.3px;top:156.90px;font-size:10.5px;font-weight:700;color:#111;transform:scaleX(0.9717);">Marks</span>
<span class="t" style="left:225px;top:156.90px;font-size:10.5px;font-weight:700;color:#111;transform:scaleX(0.9813);">Total Marks</span>
<span class="t" style="left:297.5px;top:156.90px;font-size:10.5px;font-weight:700;color:#111;transform:scaleX(0.9625);">Percentage</span>
<span class="t" style="left:371px;top:156.90px;font-size:10.5px;font-weight:700;color:#111;transform:scaleX(0.9552);">Grade</span>
<span class="t" style="left:48.03px;top:171.75px;font-size:8.2px;color:#0a0a0a;transform:scaleX(0.9534);">1</span>
<span class="t" style="left:86.8px;top:171.75px;font-size:8.2px;color:#0a0a0a;transform:scaleX(1.0000);transform:scaleX(0.97);">Abhishek</span>
<span class="t" style="left:184.67px;top:171.75px;font-size:8.2px;color:#0a0a0a;transform:scaleX(0.9545);">400</span>
<span class="t" style="left:246.07px;top:171.75px;font-size:8.2px;color:#0a0a0a;transform:scaleX(0.9545);">500</span>
<span class="t" style="left:319.95px;top:171.75px;font-size:8.2px;color:#0a0a0a;transform:scaleX(0.9551);">80</span>
<span class="t" style="left:382.9px;top:171.75px;font-size:8.2px;color:#0a0a0a;transform:scaleX(0.9143);">A</span>
<span class="t" style="left:48.03px;top:183.86px;font-size:8.2px;color:#0a0a0a;transform:scaleX(0.9534);">2</span>
<span class="t" style="left:86.8px;top:183.86px;font-size:8.2px;color:#0a0a0a;transform:scaleX(1.0000);transform:scaleX(0.97);">Bijoy</span>
<span class="t" style="left:184.67px;top:183.86px;font-size:8.2px;color:#0a0a0a;transform:scaleX(0.9545);">380</span>
<span class="t" style="left:246.07px;top:183.86px;font-size:8.2px;color:#0a0a0a;transform:scaleX(0.9545);">500</span>
<span class="t" style="left:319.95px;top:183.86px;font-size:8.2px;color:#0a0a0a;transform:scaleX(0.9551);">76</span>
<span class="t" style="left:382.9px;top:183.86px;font-size:8.2px;color:#0a0a0a;transform:scaleX(0.9143);">B</span>
<span class="t" style="left:48.03px;top:195.97px;font-size:8.2px;color:#0a0a0a;transform:scaleX(0.9534);">3</span>
<span class="t" style="left:86.8px;top:195.97px;font-size:8.2px;color:#0a0a0a;transform:scaleX(1.0000);transform:scaleX(0.97);">Chandrashekhar</span>
<span class="t" style="left:184.67px;top:195.97px;font-size:8.2px;color:#0a0a0a;transform:scaleX(0.9545);">360</span>
<span class="t" style="left:246.07px;top:195.97px;font-size:8.2px;color:#0a0a0a;transform:scaleX(0.9545);">500</span>
<span class="t" style="left:319.95px;top:195.97px;font-size:8.2px;color:#0a0a0a;transform:scaleX(0.9551);">72</span>
<span class="t" style="left:382.9px;top:195.97px;font-size:8.2px;color:#0a0a0a;transform:scaleX(0.9143);">B</span>
<span class="t" style="left:48.03px;top:208.08px;font-size:8.2px;color:#0a0a0a;transform:scaleX(0.9534);">4</span>
<span class="t" style="left:86.8px;top:208.08px;font-size:8.2px;color:#0a0a0a;transform:scaleX(1.0000);transform:scaleX(0.97);">Dev</span>
<span class="t" style="left:184.67px;top:208.08px;font-size:8.2px;color:#0a0a0a;transform:scaleX(0.9545);">340</span>
<span class="t" style="left:246.07px;top:208.08px;font-size:8.2px;color:#0a0a0a;transform:scaleX(0.9545);">500</span>
<span class="t" style="left:319.95px;top:208.08px;font-size:8.2px;color:#0a0a0a;transform:scaleX(0.9551);">68</span>
<span class="t" style="left:382.9px;top:208.08px;font-size:8.2px;color:#0a0a0a;transform:scaleX(0.9143);">B</span>
<span class="t" style="left:48.03px;top:220.19px;font-size:8.2px;color:#0a0a0a;transform:scaleX(0.9534);">5</span>
<span class="t" style="left:86.8px;top:220.19px;font-size:8.2px;color:#0a0a0a;transform:scaleX(1.0000);transform:scaleX(0.97);">Farah</span>
<span class="t" style="left:184.67px;top:220.19px;font-size:8.2px;color:#0a0a0a;transform:scaleX(0.9545);">405</span>
<span class="t" style="left:246.07px;top:220.19px;font-size:8.2px;color:#0a0a0a;transform:scaleX(0.9545);">500</span>
<span class="t" style="left:319.95px;top:220.19px;font-size:8.2px;color:#0a0a0a;transform:scaleX(0.9551);">81</span>
<span class="t" style="left:382.9px;top:220.19px;font-size:8.2px;color:#0a0a0a;transform:scaleX(0.9143);">A</span>
<span class="t" style="left:48.03px;top:232.30px;font-size:8.2px;color:#0a0a0a;transform:scaleX(0.9534);">6</span>
<span class="t" style="left:86.8px;top:232.30px;font-size:8.2px;color:#0a0a0a;transform:scaleX(1.0000);transform:scaleX(0.97);">Girish</span>
<span class="t" style="left:184.67px;top:232.30px;font-size:8.2px;color:#0a0a0a;transform:scaleX(0.9545);">410</span>
<span class="t" style="left:246.07px;top:232.30px;font-size:8.2px;color:#0a0a0a;transform:scaleX(0.9545);">500</span>
<span class="t" style="left:319.95px;top:232.30px;font-size:8.2px;color:#0a0a0a;transform:scaleX(0.9551);">82</span>
<span class="t" style="left:382.9px;top:232.30px;font-size:8.2px;color:#0a0a0a;transform:scaleX(0.9143);">A</span>
<span class="t" style="left:48.03px;top:244.41px;font-size:8.2px;color:#0a0a0a;transform:scaleX(0.9534);">7</span>
<span class="t" style="left:86.8px;top:244.41px;font-size:8.2px;color:#0a0a0a;transform:scaleX(1.0000);transform:scaleX(0.97);">Hina</span>
<span class="t" style="left:184.67px;top:244.41px;font-size:8.2px;color:#0a0a0a;transform:scaleX(0.9545);">290</span>
<span class="t" style="left:246.07px;top:244.41px;font-size:8.2px;color:#0a0a0a;transform:scaleX(0.9545);">500</span>
<span class="t" style="left:319.95px;top:244.41px;font-size:8.2px;color:#0a0a0a;transform:scaleX(0.9551);">58</span>
<span class="t" style="left:382.9px;top:244.41px;font-size:8.2px;color:#0a0a0a;transform:scaleX(0.8443);">C</span>
<span class="t" style="left:48.03px;top:256.52px;font-size:8.2px;color:#0a0a0a;transform:scaleX(0.9534);">8</span>
<span class="t" style="left:86.8px;top:256.52px;font-size:8.2px;color:#0a0a0a;transform:scaleX(1.0000);transform:scaleX(0.97);">Ian</span>
<span class="t" style="left:184.67px;top:256.52px;font-size:8.2px;color:#0a0a0a;transform:scaleX(0.9545);">310</span>
<span class="t" style="left:246.07px;top:256.52px;font-size:8.2px;color:#0a0a0a;transform:scaleX(0.9545);">500</span>
<span class="t" style="left:319.95px;top:256.52px;font-size:8.2px;color:#0a0a0a;transform:scaleX(0.9551);">62</span>
<span class="t" style="left:382.9px;top:256.52px;font-size:8.2px;color:#0a0a0a;transform:scaleX(0.9143);">B</span>
<span class="t" style="left:48.03px;top:268.63px;font-size:8.2px;color:#0a0a0a;transform:scaleX(0.9534);">9</span>
<span class="t" style="left:86.8px;top:268.63px;font-size:8.2px;color:#0a0a0a;transform:scaleX(1.0000);transform:scaleX(0.97);">Jackie</span>
<span class="t" style="left:184.67px;top:268.63px;font-size:8.2px;color:#0a0a0a;transform:scaleX(0.9545);">444</span>
<span class="t" style="left:246.07px;top:268.63px;font-size:8.2px;color:#0a0a0a;transform:scaleX(0.9545);">500</span>
<span class="t" style="left:316.73px;top:268.63px;font-size:8.2px;color:#0a0a0a;transform:scaleX(0.9506);">88.8</span>
<span class="t" style="left:382.9px;top:268.63px;font-size:8.2px;color:#0a0a0a;transform:scaleX(0.9143);">A</span>
<span class="t" style="left:45.85px;top:280.74px;font-size:8.2px;color:#0a0a0a;transform:scaleX(0.9551);">10</span>
<span class="t" style="left:86.8px;top:280.74px;font-size:8.2px;color:#0a0a0a;transform:scaleX(1.0000);transform:scaleX(0.97);">Kamlesh</span>
<span class="t" style="left:184.67px;top:280.74px;font-size:8.2px;color:#0a0a0a;transform:scaleX(0.9545);">333</span>
<span class="t" style="left:246.07px;top:280.74px;font-size:8.2px;color:#0a0a0a;transform:scaleX(0.9545);">500</span>
<span class="t" style="left:316.73px;top:280.74px;font-size:8.2px;color:#0a0a0a;transform:scaleX(0.9506);">66.6</span>
<span class="t" style="left:382.9px;top:280.74px;font-size:8.2px;color:#0a0a0a;transform:scaleX(0.9143);">B</span>
<span class="t" style="left:33.2px;top:320.80px;font-size:10.5px;font-weight:700;color:#111;transform:scaleX(0.9469);">Roll No</span>
<span class="t" style="left:36.3px;top:336.22px;font-size:10.5px;font-weight:700;color:#111;transform:scaleX(1.0032);">Name</span>
<span class="t" style="left:35.8px;top:351.64px;font-size:10.5px;font-weight:700;color:#111;transform:scaleX(0.9783);">Marks</span>
<span class="t" style="left:22.5px;top:367.06px;font-size:10.5px;font-weight:700;color:#111;transform:scaleX(0.9847);">Total Marks</span>
<span class="t" style="left:23.7px;top:382.48px;font-size:10.5px;font-weight:700;color:#111;transform:scaleX(0.9589);">Percentage</span>
<span class="t" style="left:36.7px;top:397.90px;font-size:10.5px;font-weight:700;color:#111;transform:scaleX(0.9486);">Grade</span>
<span class="t" style="left:101.3px;top:397.70px;font-size:7.6px;color:#444;transform:scaleX(0.9422);">(Ctrl)</span>
<span class="t" style="left:76px;top:427.80px;font-size:9px;color:#111;transform:scaleX(0.9043);-webkit-text-stroke:0.35px #111;">Sheet1</span>
<span class="t" style="left:118.4px;top:429.80px;font-size:9px;color:#333;transform:scaleX(0.9323);">Sheet2</span>
<span class="t" style="left:161.8px;top:429.80px;font-size:9px;color:#333;transform:scaleX(0.9288);">Sheet3</span>
<span class="t" style="left:204.5px;top:429.80px;font-size:9px;color:#333;transform:scaleX(0.9288);">Sheet4</span>
<span class="t" style="left:248px;top:429.80px;font-size:9px;color:#333;transform:scaleX(0.9393);">Sheet5</span>
<span class="t" style="left:291.3px;top:429.80px;font-size:9px;color:#333;transform:scaleX(0.9358);">Sheet6</span>
<span class="t" style="left:4.3px;top:446.90px;font-size:7.2px;color:#333;transform:scaleX(0.8968);">Select destination and press ENTER or choose Paste</span>
<span class="t" style="left:488.8px;top:447.00px;font-size:7.2px;color:#333;transform:scaleX(0.8722);">Count: 6</span>
<span class="t" style="left:692.9px;top:447.00px;font-size:7.4px;color:#333;transform:scaleX(0.7881);">100%</span>
</body></html>
